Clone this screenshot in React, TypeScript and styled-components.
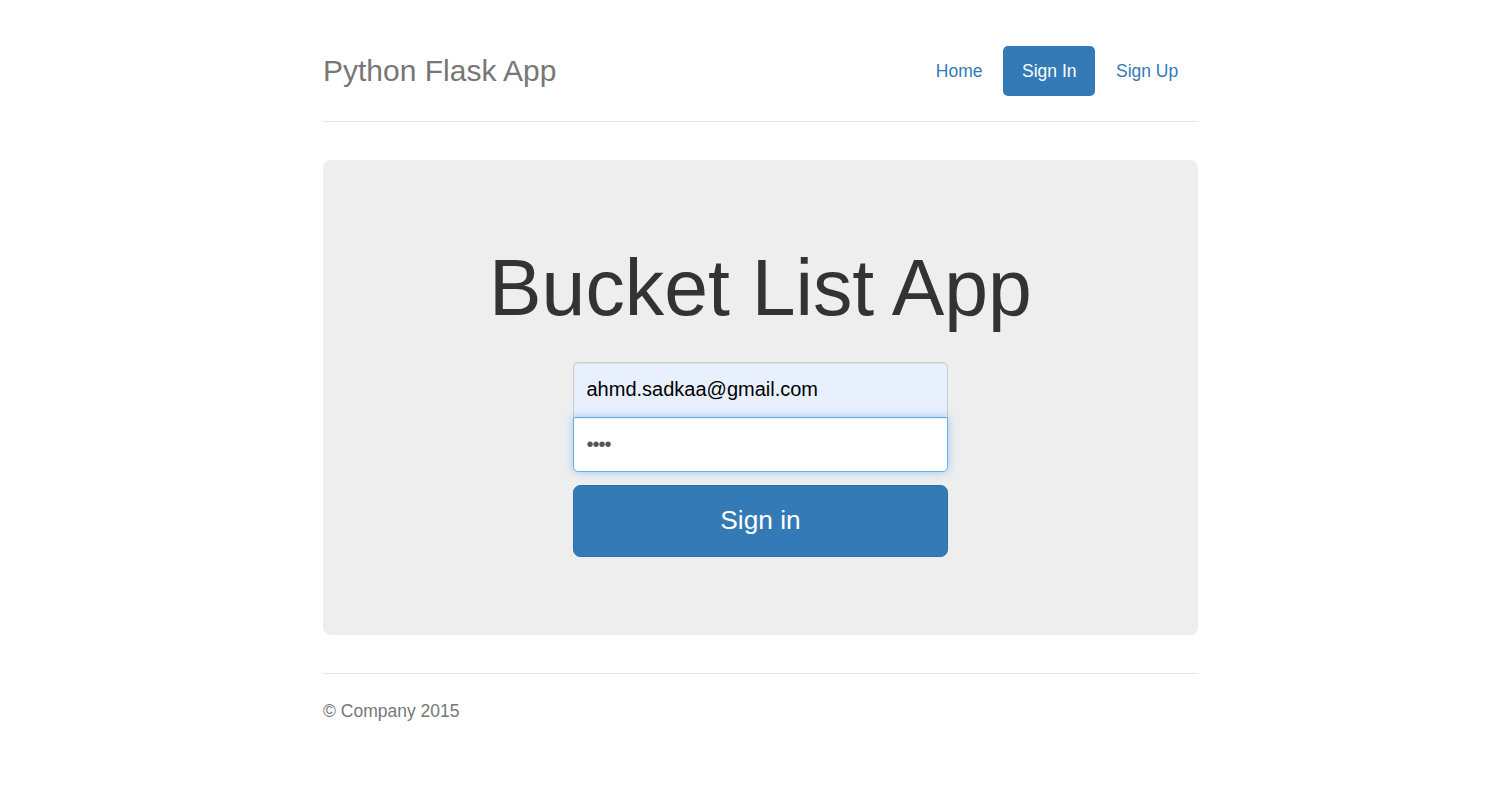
import React from 'react';
import styled, { createGlobalStyle } from 'styled-components';

const GlobalStyle = createGlobalStyle`
  html, body {
    margin: 0;
    padding: 0;
    background: #fff;
  }
  body {
    font-family: "Liberation Sans", Arial, Helvetica, sans-serif;
    font-size: 17.5px;
    line-height: 1.42857;
    color: #333;
  }
  * {
    box-sizing: border-box;
  }
`;

const navItems = ['Home', 'Sign In', 'Sign Up'];

const App = () => {
  return (
    <>
      <GlobalStyle />
      <Container>
        <Header>
          <Brand>Python Flask App</Brand>
          <Nav>
            {navItems.map((item) => (
              <NavPill key={item} $active={item === 'Sign In'} href="#">
                {item}
              </NavPill>
            ))}
          </Nav>
        </Header>
        <Jumbotron>
          <Title>Bucket List App</Title>
          <SignInForm onSubmit={(e) => e.preventDefault()}>
            <EmailInput type="email" defaultValue="ahmd.sadkaa@gmail.com" readOnly />
            <PasswordInput type="password" defaultValue="abcd" autoFocus />
            <SubmitButton type="submit">Sign in</SubmitButton>
          </SignInForm>
        </Jumbotron>
        <Footer>© Company 2015</Footer>
      </Container>
    </>
  );
};

export default App;

const Container = styled.div`
  width: 875px;
  margin-left: 323px;
  padding-top: 46px;
`;

const Header = styled.div`
  display: flex;
  justify-content: space-between;
  align-items: flex-start;
  padding-bottom: 25px;
  border-bottom: 1px solid #e5e5e5;
  margin-bottom: 38px;
`;

const Brand = styled.h3`
  margin: 0;
  font-size: 30px;
  line-height: 50px;
  font-weight: 400;
  color: #777;
`;

const Nav = styled.nav`
  display: flex;
  gap: 2px;
  margin-right: 1px;
`;

const NavPill = styled.a<{ $active?: boolean }>`
  display: block;
  padding: 12.5px 18.75px;
  line-height: 25px;
  border-radius: 5px;
  text-decoration: none;
  color: ${(p) => (p.$active ? '#fff' : '#337ab7')};
  background: ${(p) => (p.$active ? '#337ab7' : 'transparent')};
`;

const Jumbotron = styled.div`
  background: #eee;
  border-radius: 7.5px;
  padding: 60px 75px 59px;
  text-align: center;
  margin-bottom: 38px;
`;

const Title = styled.h1`
  margin: 25px 0 11.5px;
  font-size: 78.75px;
  line-height: 1.1;
  font-weight: 400;
  color: #333;
`;

const SignInForm = styled.form`
  width: 412.5px;
  margin: 0 auto;
  padding: 18.75px;
  display: flex;
  flex-direction: column;
`;

const BaseInput = styled.input`
  display: block;
  width: 100%;
  padding: 12.5px;
  font-family: "Liberation Sans", Arial, sans-serif;
  font-size: 20px;
  line-height: 28px;
  border: 1px solid #ccc;
  outline: none;
`;

const EmailInput = styled(BaseInput)`
  height: 56px;
  background: #e8f0fe;
  color: #000;
  border-radius: 5px 5px 0 0;
  margin-bottom: -1px;
  box-shadow: inset 0 1px 1px rgba(0, 0, 0, 0.075);
`;

const PasswordInput = styled(BaseInput)`
  position: relative;
  height: 55px;
  background: #fff;
  color: #555;
  caret-color: #333;
  border-color: #66afe9;
  border-radius: 0 0 5px 5px;
  margin-bottom: 13px;
  box-shadow: inset 0 1px 1px rgba(0, 0, 0, 0.075), 0 0 10px rgba(102, 175, 233, 0.6);
  letter-spacing: -1px;
`;

const SubmitButton = styled.button`
  display: block;
  width: 100%;
  height: 72px;
  padding: 17.5px 30px;
  font-family: "Liberation Sans", Arial, sans-serif;
  font-size: 26.25px;
  line-height: 35px;
  color: #fff;
  background: #337ab7;
  border: 1px solid #2e6da4;
  border-radius: 7.5px;
  cursor: pointer;
`;

const Footer = styled.footer`
  padding-top: 25.5px;
  border-top: 1px solid #e5e5e5;
  color: #777;
  line-height: 25px;
`;
